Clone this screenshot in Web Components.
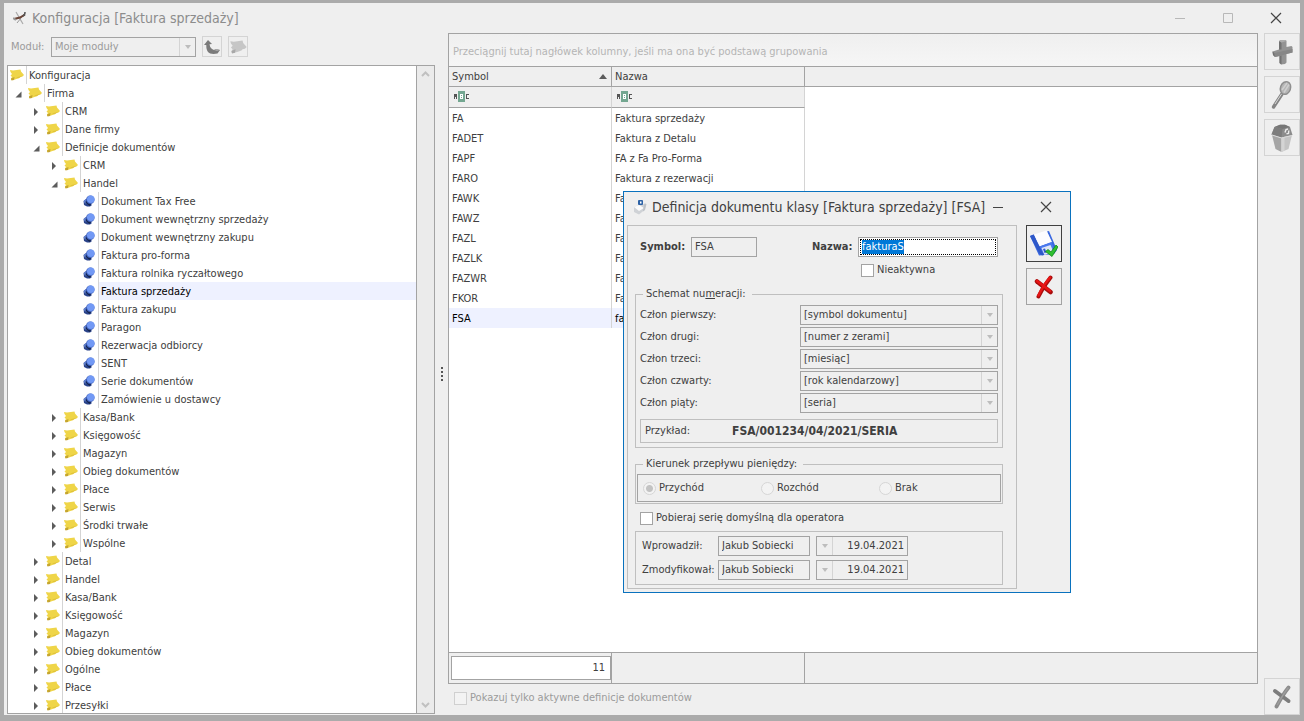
<!DOCTYPE html>
<html lang="pl">
<head>
<meta charset="utf-8">
<title>Konfiguracja [Faktura sprzedaży]</title>
<style>
  :root {
    --line: #a3a3a3;
    --line-soft: #bfbfbf;
    --line-faint: #d4d4d4;
    --face: #efefef;
    --text: #404040;
    --muted: #9b9b9b;
    --accent: #0a72be;
  }
  html, body { height: 100%; }
  body {
    margin: 0;
    background: #ababab;
    color: var(--text);
    font: 11px/14px "DejaVu Sans Condensed", "DejaVu Sans", sans-serif;
    overflow: hidden;
  }
</style>
</head>
<body>
<app-window></app-window>

<script>
const define = (name, html, setup) => {
  const template = document.createElement('template');
  template.innerHTML = html;
  customElements.define(name, class extends HTMLElement {
    connectedCallback() {
      if (this.shadowRoot) return;
      this.attachShadow({ mode: 'open' }).append(template.content.cloneNode(true));
      if (setup) setup(this, this.shadowRoot);
    }
  });
};

/* ---------- icons ---------- */
const icons = {
  tools: `<svg width="14" height="14" viewBox="0 0 14 14"><path d="M3 1l7 12" stroke="#aaa" stroke-width="1.2"/><path d="M12 2L4 12" stroke="#999" stroke-width="1"/><path d="M1 8l6-1.500 5-3" stroke="#6b4436" stroke-width="2" fill="none"/><path d="M10 5c1.500-.5 2-2 2-4" stroke="#555" stroke-width="1.500" fill="none"/><path d="M0 7l3 2" stroke="#999" stroke-width="2"/></svg>`,
  note: `<svg width="14" height="12" viewBox="0 0 14 12"><path d="M0 1L3 1.500 10.500 .5l.5 2 3 3.500-1.500 1.500-2 .5-1 1-3 1-3 1-2.500 0L1 9.500l1-1.500L.5 6.500 2 5 .5 3z" fill="#efd548"/><path d="M1 9.500l3.500-1.500L4 11l-2.500 .5z" fill="#c3a433"/><path d="M6 8.500l7-2-3 1.800-2 1z" fill="#dfc23c"/></svg>`,
  noteGrey: `<svg width="17" height="14" viewBox="0 0 14 12"><path d="M0 1L3 1.500 10.500 .5l.5 2 3 3.500-1.500 1.500-2 .5-1 1-3 1-3 1-2.500 0L1 9.500l1-1.500L.5 6.500 2 5 .5 3z" fill="#c6c6c6"/><path d="M1 9.500l3.500-1.500L4 11l-2.500 .5z" fill="#a8a8a8"/></svg>`,
  pin: `<svg width="12" height="12" viewBox="0 0 12 12"><path d="M.5 6L3 4l6 6-2 1.500H4L1 10z" fill="#2a438a"/><circle cx="3" cy="6.500" r="2" fill="#6485d6"/><path d="M3 5l5 4.500-1.500 1.500L2.500 7.500z" fill="#16264f"/><circle cx="7.300" cy="4.800" r="4.200" fill="#3a5cb8"/><circle cx="7.800" cy="4.200" r="3.800" fill="#7299f5"/></svg>`,
  up: `<svg width="16" height="14" viewBox="0 0 16 14"><path d="M4 0l4 4-2.500.3C6 8 8 9.500 10 10l2-1 4 1-2.500 3.500c-4 1-8 .5-9.500-1.500C2.500 10 2.200 7.500 2.300 5L0 5z" fill="#7b7b7b"/><path d="M10 10l2-1 4 1-3 1z" fill="#aaa"/></svg>`,
  plus: `<svg width="21" height="26" viewBox="0 0 21 26"><path d="M7 2l2-1h4.500l1 1v6l5-1 1 1v5.500L14.500 15v8.500L13 25l-4 .5L7.500 24v-7L3 18l-2-2-.5-3.500L7 10.500z" fill="#939393"/><path d="M.5 12.500L2.500 14l.5 4-2-2z" fill="#707070"/><path d="M7.500 17l2-.5v9L7.500 24zM7 2l2.500 1.500v7L7 10.500z" fill="#727272"/><path d="M2.500 14L20.500 10v3.500L14.500 15l-5 1.500L3 18z" fill="#878787"/><path d="M7 2l2-1h4.500l1 1-5 1.500z" fill="#adadad"/></svg>`,
  lens: `<svg width="22" height="30" viewBox="0 0 22 30"><path d="M2.500 27L11 14" stroke="#858585" stroke-width="3.500" stroke-linecap="round"/><path d="M4 24l6.500-10" stroke="#d8d8d8" stroke-width="1"/><ellipse cx="14.500" cy="8" rx="5" ry="6.500" transform="rotate(20 14.500 8)" fill="#b5b5b5" stroke="#8f8f8f" stroke-width="1.500"/><path d="M11 10L16 3M13 12.500l5-8" stroke="#cfcfcf" stroke-width="1.500"/></svg>`,
  bin: `<svg width="22" height="28" viewBox="0 0 22 28"><path d="M1 11l3.500 14 6 3V14z" fill="#a5a5a5"/><path d="M10.500 14v14l7-3L21 11z" fill="#c4c4c4"/><path d="M10.500 14v14l3-1.500V13.500z" fill="#d4d4d4"/><path d="M.5 10.500L3.500 3 9 .8h5L19 3l2.500 8-11 2.500z" fill="#8c8c8c"/><path d="M3.500 3L9 .8h5L19 3l-7.500 2z" fill="#777"/><path d="M.5 10.500L3.500 3l8 2-1 8.500z" fill="#7d7d7d"/><path d="M1 11l9.500 3L21 11.500" stroke="#dadada" fill="none"/><path d="M14 8.500l1-3 2-.5m.8 1.500l-.3 3-2 .3" stroke="#ececec" stroke-width="1.400" fill="none"/></svg>`,
  crossGrey: `<svg width="20" height="24" viewBox="0 0 20 24"><path d="M4.500 21.500C8 15 12 8 16.500 2.500" stroke="#8b8b8b" stroke-width="3.800" stroke-linecap="round" fill="none"/><path d="M3 6l13.500 10" stroke="#7d7d7d" stroke-width="4" stroke-linecap="round"/><path d="M5.500 19.500C8 15 12 8 16 3" stroke="#9c9c9c" stroke-width="1.500" stroke-linecap="round" fill="none"/></svg>`,
  crossRed: `<svg width="20" height="24" viewBox="0 0 20 24"><path d="M4.500 21.500C7.500 15 12 8 16.500 2.500" stroke="#a80d0d" stroke-width="4" stroke-linecap="round" fill="none"/><path d="M3 6.500L16.500 17" stroke="#a80d0d" stroke-width="4.500" stroke-linecap="round"/><path d="M4.500 20.500C7.500 14 12 7 16 2.500M3 6l13 10" stroke="#e81515" stroke-width="2.500" stroke-linecap="round" fill="none"/></svg>`,
  save: `<svg width="28" height="28" viewBox="0 0 28 28"><path d="M0 6l4-1.500L9 16l13-4-5-10.500L19 1l8 19-3 4-15 1.500z" fill="#3a68e0"/><path d="M4 4.500L16.500 .5l5 11.500L9.500 16.500z" fill="#fcfcff"/><path d="M9.500 16.500L21.500 12l3 7.500-12 5z" fill="#4a78ee"/><path d="M11.500 18l9-3 3 7-9 3z" fill="#dfe5f6"/><path d="M0 6l3.500-1.500L14 25l-2 .5L9 23z" fill="#2e58c8"/><path d="M13 19l2-.5 1.500 4-2 .5z" fill="#2e58c8"/><path d="M15.500 21.500l2.500-2 3 2.500 5-7 2 2-6 9.500z" fill="#2fc02f" stroke="#128a18" stroke-width=".8"/></svg>`,
  doc: `<svg width="14" height="15" viewBox="0 0 14 15"><path d="M1 7l5-2 7-1.500-1.500 6.500L6 14.500 1 12z" fill="#cfd2d6"/><path d="M1 7l5-2 5 3-5 3z" fill="#fbfbfb"/><path d="M11.500 3.500L13.500 4 12 10l-2 1.500.5-4z" fill="#bcc1c7"/><rect x="5" y="0" width="5" height="5" rx="1" fill="#2d62a6"/><rect x="7" y="1.500" width="1.500" height="2" fill="#fff"/></svg>`,
  min: `<svg width="12" height="12" viewBox="0 0 12 12"><path d="M1 6.500h10" stroke="currentColor"/></svg>`,
  max: `<svg width="12" height="12" viewBox="0 0 12 12"><path d="M1.500 1.500h9v9h-9z" stroke="currentColor" fill="none"/></svg>`,
  close: `<svg width="12" height="12" viewBox="0 0 12 12"><path d="M1 1l10 10M11 1L1 11" stroke="currentColor" stroke-width="1.200"/></svg>`,
  closed: `<svg width="6" height="8" viewBox="0 0 6 8"><path d="M1 0l4 4-4 4z" fill="#5c5c5c"/></svg>`,
  open: `<svg width="7" height="7" viewBox="0 0 7 7"><path d="M6.500 .5v6h-6z" fill="#5c5c5c"/></svg>`,
  abc: `<svg width="16" height="11" viewBox="0 0 16 11"><path d="M0 8V3h3v5H2V6H1v2zM12 3h3v1h-2v3h2v1h-3z" fill="#555"/><rect x="4" width="7" height="11" fill="#74a791"/><path d="M6 3h3v5H6z" fill="#fff"/><path d="M7 4h1v1H7zM7 6h1v1H7z" fill="#74a791"/></svg>`,
  chevUp: `<svg width="9" height="6" viewBox="0 0 9 6"><path d="M1 5l3.500-3.500L8 5" stroke="#c0c0c0" stroke-width="2" fill="none"/></svg>`,
  chevDown: `<svg width="9" height="6" viewBox="0 0 9 6"><path d="M1 1l3.500 3.500L8 1" stroke="#c0c0c0" stroke-width="2" fill="none"/></svg>`
};

define('ui-icon', `<style>:host{display:inline-flex;flex:none}svg{display:block}</style>`,
  (el, root) => root.append(document.createRange().createContextualFragment(icons[el.getAttribute('name')])));

/* ---------- title bar ---------- */
define('title-bar', `
<style>
  :host{display:flex;align-items:center;height:30px;flex:none}
  h1{flex:1;min-width:0;margin:0 0 0 5px;font-size:14px;line-height:20px;font-weight:400;white-space:nowrap}
  button{flex:none;width:48px;height:28px;padding:0;border:0;background:none;color:#b8b8b8;display:flex;align-items:center;justify-content:center}
  .close,:host([dialog]) button{color:#444}
</style>
<ui-icon name="tools"></ui-icon>
<h1><slot></slot></h1>
<button class="min" aria-label="Minimalizuj"><ui-icon name="min"></ui-icon></button>
<button class="max" aria-label="Maksymalizuj"><ui-icon name="max"></ui-icon></button>
<button class="close" aria-label="Zamknij"><ui-icon name="close"></ui-icon></button>`,
(el, root) => {
  if (el.hasAttribute('dialog')) {
    root.querySelector('.max').remove();
    const icon = document.createElement('ui-icon');
    icon.setAttribute('name', 'doc');
    root.querySelector('ui-icon').replaceWith(icon);
  }
});

/* ---------- buttons ---------- */
define('icon-button', `
<style>
  :host{display:block;flex:none;width:36px;height:37px}
  :host([small]){width:20px;height:21px}
  button{width:100%;height:100%;padding:0;border:1px solid var(--button-line,var(--line-faint));background:none;display:flex;align-items:center;justify-content:center}
</style>
<button><ui-icon></ui-icon></button>`,
(el, root) => {
  const icon = document.createElement('ui-icon');
  icon.setAttribute('name', el.getAttribute('icon'));
  root.querySelector('ui-icon').replaceWith(icon);
  root.querySelector('button').setAttribute('aria-label', el.getAttribute('label'));
});

/* ---------- form controls ---------- */
define('drop-down', `
<style>
  :host{display:flex;align-items:center;flex:none}
  label{flex:1;white-space:nowrap}
  .box{position:relative;width:var(--box,198px);height:20px;box-sizing:border-box;border:1px solid var(--line);display:flex}
  select{appearance:none;width:100%;border:0;padding:0 20px 0 3px;margin:0;background:none;color:inherit;font:inherit;opacity:1;outline:0}
  .arrow{position:absolute;right:0;top:0;bottom:0;width:15px;border-left:1px solid var(--line-faint);display:flex;align-items:center;justify-content:center;pointer-events:none}
  .arrow::after{content:"";border:3px solid transparent;border-top:4px solid #bdbdbd;border-bottom:0}
</style>
<label for="s"></label><div class="box"><select id="s"><option></option></select><span class="arrow"></span></div>`,
(el, root) => {
  root.querySelector('label').textContent = el.getAttribute('label');
  root.querySelector('option').textContent = el.getAttribute('value');
});

define('text-field', `
<style>
  :host{display:flex;align-items:center;flex:none}
  label{white-space:nowrap;width:var(--label,auto)}
  :host([strong]) label{font-weight:700}
  .box{width:var(--box,92px);height:20px;box-sizing:border-box;border:1px solid var(--line);display:flex;padding:1px}
  input{flex:1;min-width:0;border:0;padding:0 2px;background:none;color:inherit;font:inherit;outline:0}
  :host([active]) .box{background:#fff}
  :host([active]) input{border:1px dotted #000;padding:0 1px}
  input::selection{background:#0078d7;color:#fff}
</style>
<label for="i"></label><div class="box"><input id="i"></div>`,
(el, root) => {
  const input = root.querySelector('input');
  root.querySelector('label').textContent = el.getAttribute('label');
  input.value = el.getAttribute('value');
  if (el.hasAttribute('active')) requestAnimationFrame(() => { input.focus(); input.select(); });
});

define('date-field', `
<style>
  :host{display:flex;box-sizing:border-box;width:92px;height:20px;border:1px solid var(--line);flex:none}
  button{width:16px;padding:0;border:0;border-right:1px solid var(--line-faint);background:none;display:flex;align-items:center;justify-content:center}
  button::after{content:"";border:3px solid transparent;border-top:4px solid #bdbdbd;border-bottom:0}
  input{flex:1;min-width:0;border:0;padding:0 3px;background:none;color:inherit;font:inherit;text-align:right;outline:0}
</style>
<button aria-label="Kalendarz"></button><input>`,
(el, root) => {
  const input = root.querySelector('input');
  input.value = el.getAttribute('value');
  input.setAttribute('aria-label', 'Data');
});

define('check-option', `
<style>
  :host{display:flex;flex:none}
  label{display:flex;align-items:center;gap:3px;white-space:nowrap}
  input{appearance:none;margin:0;width:13px;height:13px;box-sizing:border-box;border:1px solid var(--line);background:#fff}
  input[type=radio]{border-radius:50%;border-color:#d6d6d6;background:#f3f3f3}
  input[type=radio]:checked{background:radial-gradient(circle,#c3c3c3 3px,#f3f3f3 4px)}
  :host([muted]) label{color:var(--muted)}
  :host([muted]) input{border-color:#d0d0d0;background:#f3f3f3}
</style>
<label><input type="checkbox"><span><slot></slot></span></label>`,
(el, root) => {
  const input = root.querySelector('input');
  if (el.hasAttribute('radio')) { input.type = 'radio'; input.name = 'kierunek'; }
  input.checked = el.hasAttribute('checked');
});

define('group-box', `
<style>
  :host{display:block}
  fieldset{margin:0;padding:0;min-width:0;border:1px solid var(--line-soft)}
  legend{margin-left:7px;padding:0 6px 0 3px;height:14px}
</style>
<fieldset><legend><slot name="title"></slot></legend><slot></slot></fieldset>`,
(el, root) => { if (el.hasAttribute('plain')) root.querySelector('legend').remove(); });

/* ---------- tree ---------- */
define('tree-node', `
<style>
  :host{display:flex;height:18px;align-items:center;line-height:20px;padding-left:calc(var(--level) * 18px)}
  .toggle{width:18px;display:flex;justify-content:center;align-items:center;margin-left:-18px;padding:2px 0 0 2px;box-sizing:border-box}
  .icon{width:18px;height:18px;box-sizing:border-box;display:flex;align-items:center;justify-content:center;flex:none}
  .text{flex:1;height:18px;padding-left:2px;border-left:1px solid var(--line-faint);white-space:nowrap}
  :host([current]) .text{background:#eef1ff;color:#000}
</style>
<span class="toggle"></span><span class="icon"></span><span class="text"><slot></slot></span>`,
(el, root) => {
  const state = el.getAttribute('state');
  el.setAttribute('role', 'treeitem');
  el.style.setProperty('--level', el.getAttribute('level'));
  const add = (sel, name) => {
    const icon = document.createElement('ui-icon');
    icon.setAttribute('name', name);
    root.querySelector(sel).append(icon);
  };
  if (state === 'open' || state === 'closed') add('.toggle', state);
  else root.querySelector('.toggle').remove();
  add('.icon', state === 'leaf' ? 'pin' : 'note');
});

const tree = [
  [0, 'root', 'Konfiguracja'], [1, 'open', 'Firma'], [2, 'closed', 'CRM'], [2, 'closed', 'Dane firmy'],
  [2, 'open', 'Definicje dokumentów'], [3, 'closed', 'CRM'], [3, 'open', 'Handel'],
  [4, 'leaf', 'Dokument Tax Free'], [4, 'leaf', 'Dokument wewnętrzny sprzedaży'], [4, 'leaf', 'Dokument wewnętrzny zakupu'],
  [4, 'leaf', 'Faktura pro-forma'], [4, 'leaf', 'Faktura rolnika ryczałtowego'], [4, 'leaf', 'Faktura sprzedaży', true],
  [4, 'leaf', 'Faktura zakupu'], [4, 'leaf', 'Paragon'], [4, 'leaf', 'Rezerwacja odbiorcy'], [4, 'leaf', 'SENT'],
  [4, 'leaf', 'Serie dokumentów'], [4, 'leaf', 'Zamówienie u dostawcy'],
  [3, 'closed', 'Kasa/Bank'], [3, 'closed', 'Księgowość'], [3, 'closed', 'Magazyn'], [3, 'closed', 'Obieg dokumentów'],
  [3, 'closed', 'Płace'], [3, 'closed', 'Serwis'], [3, 'closed', 'Środki trwałe'], [3, 'closed', 'Wspólne'],
  [2, 'closed', 'Detal'], [2, 'closed', 'Handel'], [2, 'closed', 'Kasa/Bank'], [2, 'closed', 'Księgowość'],
  [2, 'closed', 'Magazyn'], [2, 'closed', 'Obieg dokumentów'], [2, 'closed', 'Ogólne'], [2, 'closed', 'Płace'], [2, 'closed', 'Przesyłki']
];

define('config-tree', `
<style>
  :host{display:flex;border:1px solid var(--line);background:#fff;min-height:0}
  .nodes{flex:1;overflow:hidden}
  .scroll{width:17px;border-left:1px solid var(--line);background:#ebebeb;display:flex;flex-direction:column;justify-content:space-between;align-items:center;padding:5px 0;box-sizing:content-box}
</style>
<div class="nodes" role="tree"></div>
<div class="scroll"><ui-icon name="chevUp"></ui-icon><ui-icon name="chevDown"></ui-icon></div>`,
(el, root) => {
  root.querySelector('.nodes').innerHTML = tree.map(([level, state, text, current]) =>
    `<tree-node level="${level}" state="${state}"${current ? ' current' : ''}>${text}</tree-node>`).join('');
});

/* ---------- data grid ---------- */
const documents = [
  ['FA', 'Faktura sprzedaży'], ['FADET', 'Faktura z Detalu'], ['FAPF', 'FA z Fa Pro-Forma'], ['FARO', 'Faktura z rezerwacji'],
  ['FAWK', 'Fa'], ['FAWZ', 'Fa'], ['FAZL', 'Fa'], ['FAZLK', 'Fa'], ['FAZWR', 'Fa'], ['FKOR', 'Fa'], ['FSA', 'fa']
];

define('document-grid', `
<style>
  :host{display:flex;flex-direction:column;border:1px solid var(--line);background:#fff;min-height:0}
  .group{height:32px;line-height:36px;padding-left:4px;color:#b5b5b5;background:linear-gradient(#efefef,#f6f6f6);border-bottom:1px solid var(--line);white-space:nowrap}
  table{width:100%;border-collapse:separate;border-spacing:0;table-layout:fixed;text-align:left}
  .c1{width:163px}.c2{width:193px}
  th,td{box-sizing:border-box;height:20px;padding:0 3px;font-weight:400;white-space:nowrap}
  td{padding-top:2px}
  th{background:var(--face);border-bottom:1px solid var(--line);border-right:1px solid var(--line)}
  th:last-child{border-right:0}
  .sorted{display:flex;justify-content:space-between;align-items:center}
  .sorted::after{content:"";border:4px solid transparent;border-bottom:5px solid #5c5c5c;border-top:0;margin-right:1px}
  .filter td{height:21px;padding:2px 0 0 5px;background:var(--face);border-bottom:1px solid var(--line)}
  td{border-right:1px solid var(--line-faint)}
  td:last-child,.filter td:last-child{border:0;background:none}
  .current td:not(:last-child){background:#eef1ff;color:#000}
  .summary{margin-top:auto;display:grid;grid-template-columns:162px 192px 1fr;gap:1px;background:var(--line);border-top:1px solid var(--line)}
  .summary>*{background:var(--face);height:30px;box-sizing:border-box}
  .summary label{display:flex;padding:3px 0 3px 2px}
  .summary input{flex:1;min-width:0;box-sizing:border-box;border:1px solid var(--line);padding:0 5px;background:#fff;color:inherit;font:inherit;text-align:right}
</style>
<div class="group">Przeciągnij tutaj nagłówek kolumny, jeśli ma ona być podstawą grupowania</div>
<table>
  <colgroup><col class="c1"><col class="c2"><col></colgroup>
  <thead><tr><th><div class="sorted">Symbol</div></th><th>Nazwa</th><th></th></tr></thead>
  <tbody><tr class="filter"><td><ui-icon name="abc"></ui-icon></td><td><ui-icon name="abc"></ui-icon></td><td></td></tr></tbody>
</table>
<div class="summary"><label><input value="11" aria-label="Liczba dokumentów"></label><span></span><span></span></div>`,
(el, root) => {
  root.querySelector('tbody').insertAdjacentHTML('beforeend', documents.map(([symbol, name]) =>
    `<tr${symbol === 'FSA' ? ' class="current"' : ''}><td>${symbol}</td><td>${name}</td><td></td></tr>`).join(''));
});

/* ---------- document dialog ---------- */
define('document-dialog', `
<style>
  :host{display:flex;flex-direction:column;box-sizing:border-box;width:448px;padding-bottom:3px;border:1px solid var(--accent);background:var(--face)}
  title-bar{padding-left:9px;margin-bottom:3px}
  .body{display:flex;gap:9px;padding-left:3px}
  .panel{box-sizing:border-box;width:390px;padding:11px 13px 3px 7px;border:1px solid var(--line-soft)}
  .actions{display:flex;flex-direction:column;gap:6px}
  .actions icon-button{--button-line:var(--line)}
  .actions icon-button:first-child{--button-line:#404040}
  .names{display:flex;justify-content:space-between;padding:0 5px}
  .inactive{padding:6px 0 0 226px}
  .scheme{margin-top:10px}
  .rows{display:flex;flex-direction:column;gap:2px;padding:4px}
  .sample{display:flex;align-items:center;height:22px;margin-top:4px;padding-left:4px;border:1px solid var(--line-soft)}
  .sample span{width:87px}
  .sample b{font-size:12px}
  .flow{margin-top:9px}
  .radios{display:grid;grid-template-columns:118px 118px 1fr;align-items:center;height:26px;margin:3px 1px 1px;padding-left:5px;border:1px solid var(--line)}
  .series{padding:7px 5px 6px}
  .audit{display:grid;grid-template-columns:1fr;gap:4px;padding:4px 6px}
  .audit div{display:flex;gap:6px}
  .audit text-field{--label:76px}
</style>
<title-bar dialog>Definicja dokumentu klasy [Faktura sprzedaży] [FSA]</title-bar>
<div class="body">
  <div class="panel">
    <div class="names">
      <text-field strong label="Symbol:" value="FSA" style="--box:66px;--label:51px"></text-field>
      <text-field strong active label="Nazwa:" value="fakturaS" style="--box:140px;--label:46px"></text-field>
    </div>
    <check-option class="inactive">Nieaktywna</check-option>
    <group-box class="scheme">
      <span slot="title">Schemat nu<u>m</u>eracji:</span>
      <div class="rows">
        <drop-down label="Człon pierwszy:" value="[symbol dokumentu]"></drop-down>
        <drop-down label="Człon drugi:" value="[numer z zerami]"></drop-down>
        <drop-down label="Człon trzeci:" value="[miesiąc]"></drop-down>
        <drop-down label="Człon czwarty:" value="[rok kalendarzowy]"></drop-down>
        <drop-down label="Człon piąty:" value="[seria]"></drop-down>
        <div class="sample"><span>Przykład:</span><b>FSA/001234/04/2021/SERIA</b></div>
      </div>
    </group-box>
    <group-box class="flow">
      <span slot="title">Kierunek przepływu pieniędzy:</span>
      <div class="radios">
        <check-option radio checked>Przychód</check-option>
        <check-option radio>Rozchód</check-option>
        <check-option radio>Brak</check-option>
      </div>
    </group-box>
    <check-option class="series">Pobieraj serię domyślną dla operatora</check-option>
    <group-box plain>
      <div class="audit">
        <div><text-field label="Wprowadził:" value="Jakub Sobiecki"></text-field><date-field value="19.04.2021"></date-field></div>
        <div><text-field label="Zmodyfikował:" value="Jakub Sobiecki"></text-field><date-field value="19.04.2021"></date-field></div>
      </div>
    </group-box>
  </div>
  <div class="actions">
    <icon-button icon="save" label="Zapisz"></icon-button>
    <icon-button icon="crossRed" label="Anuluj"></icon-button>
  </div>
</div>`);

/* ---------- main window ---------- */
define('app-window', `
<style>
  :host{display:flex;flex-direction:column;box-sizing:border-box;height:100vh;border:solid #ababab;border-width:3px 4px 6px;background:var(--face)}
  title-bar{padding-left:9px;color:#8c8c8c}
  .main{flex:1;min-height:0;display:flex;padding-left:3px}
  .left{width:428px;flex:none;display:flex;flex-direction:column;padding-bottom:1px}
  .tools{display:flex;gap:6px;align-items:center;height:21px;padding:3px 4px 8px;color:var(--muted)}
  .tools drop-down{width:185px;--box:145px}
  config-tree{flex:1}
  .split{width:13px;display:flex;align-items:center;justify-content:center}
  .split i{width:2px;height:15px;background:repeating-linear-gradient(#555 0 2px,transparent 2px 4px)}
  .centre{flex:1;min-width:0;display:flex;flex-direction:column}
  document-grid{flex:1}
  .centre check-option{padding:7px 6px 10px}
  .side{width:36px;margin-left:6px;display:flex;flex-direction:column;gap:6px}
  .side icon-button:last-child{margin-top:auto}
  document-dialog{position:absolute;left:623px;top:191px}
</style>
<title-bar>Konfiguracja [Faktura sprzedaży]</title-bar>
<div class="main">
  <div class="left">
    <div class="tools">
      <drop-down label="Moduł:" value="Moje moduły"></drop-down>
      <icon-button small icon="up" label="W górę"></icon-button>
      <icon-button small icon="noteGrey" label="Notatka"></icon-button>
    </div>
    <config-tree></config-tree>
  </div>
  <div class="split"><i></i></div>
  <div class="centre">
    <document-grid></document-grid>
    <check-option muted>Pokazuj tylko aktywne definicje dokumentów</check-option>
  </div>
  <div class="side">
    <icon-button icon="plus" label="Dodaj"></icon-button>
    <icon-button icon="lens" label="Podgląd"></icon-button>
    <icon-button icon="bin" label="Usuń"></icon-button>
    <icon-button icon="crossGrey" label="Zamknij"></icon-button>
  </div>
</div>
<document-dialog role="dialog"></document-dialog>`);
</script>
</body>
</html>
